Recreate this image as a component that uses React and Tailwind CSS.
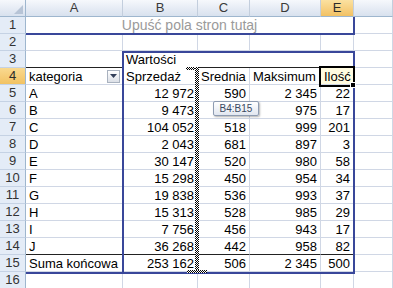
import React from "react";

// pivot: kategoria x (Sprzedaż, Srednia, Maksimum, Ilość)
const rows = [
  ["A", "12 972", "590", "2 345", "22"],
  ["B", "9 473", "557", "975", "17"],
  ["C", "104 052", "518", "999", "201"],
  ["D", "2 043", "681", "897", "3"],
  ["E", "30 147", "520", "980", "58"],
  ["F", "15 298", "450", "954", "34"],
  ["G", "19 838", "536", "993", "37"],
  ["H", "15 313", "528", "985", "29"],
  ["I", "7 756", "456", "943", "17"],
  ["J", "36 268", "442", "958", "82"],
];

const cell =
  "flex items-center border-r border-b px-[3px] text-[13px] leading-[15px] whitespace-nowrap overflow-hidden";
const grid = "border-[#d0d7e5]";
const ants =
  "absolute bg-[image:repeating-conic-gradient(#000_0%_25%,#fff_0%_50%)] bg-[length:2px_2px]";

function ColHead({ label, active }) {
  return (
    <div
      className={`flex items-center justify-center border-r border-r-[#c3cedd] border-b border-b-[#9eb6ce] text-[13px] ${
        active
          ? "bg-linear-to-b from-[#fbe1a0] to-[#f2c163] text-[#2b2b2b]"
          : "bg-linear-to-b from-[#f6f8fc] to-[#d8e1ee] text-[#3a3a3a]"
      }`}
    >
      {label}
    </div>
  );
}

function RowHead({ n, active }) {
  return (
    <div
      className={`flex items-center justify-center border-r border-r-[#9eb6ce] border-b border-b-[#c5d2e4] text-[13px] ${
        active
          ? "bg-linear-to-b from-[#f9d98f] to-[#f2c262] text-[#2b2b2b]"
          : "bg-[#e4ecf7] text-[#333]"
      }`}
    >
      {n}
    </div>
  );
}

function Cell({ children, right, className = "" }) {
  return (
    <div className={`${cell} ${right ? "justify-end" : "justify-start"} ${className}`}>
      {children}
    </div>
  );
}

export default function App() {
  return (
    <div className="w-[393px] h-[288px] overflow-hidden bg-white font-['Liberation_Sans',Arial,sans-serif] text-black">
      <div className="relative grid grid-cols-[26px_97px_75px_52px_71px_33px_39px] auto-rows-[17px]">
        {/* corner + column letters */}
        <div className="relative border-r border-r-[#9eb6ce] border-b border-b-[#9eb6ce] bg-linear-to-b from-[#f6f8fc] to-[#d8e1ee]">
          <div className="absolute right-[2px] bottom-[2px] w-0 h-0 border-l-[9px] border-l-transparent border-b-[9px] border-b-[#b7c4d6]" />
        </div>
        <ColHead label="A" />
        <ColHead label="B" />
        <ColHead label="C" />
        <ColHead label="D" />
        <ColHead label="E" active />
        <ColHead label="" />

        {/* 1: page field drop zone */}
        <RowHead n={1} />
        <Cell className={`col-span-5 justify-center text-[14px] text-[#9a9a9a] ${grid}`}>
          <span className="mx-auto">Upuść pola stron tutaj</span>
        </Cell>
        <Cell className={grid} />

        {/* 2 */}
        <RowHead n={2} />
        {[0, 1, 2, 3, 4, 5].map((i) => (
          <Cell key={i} className={grid} />
        ))}

        {/* 3 */}
        <RowHead n={3} />
        <Cell className={`${grid} border-b-[#222]`} />
        <Cell className="border-transparent">Wartości</Cell>
        <Cell className="col-span-3 border-r-transparent border-b-[#222]" />
        <Cell className={grid} />

        {/* 4: field headers */}
        <RowHead n={4} active />
        <Cell className={`${grid} pr-[2px]`}>
          <span>kategoria</span>
          <span className="ml-auto flex h-[13px] w-[13px] items-center justify-center border border-[#a9b2bf] bg-linear-to-b from-white to-[#dce0e7]">
            <svg width="7" height="4" viewBox="0 0 7 4">
              <path d="M0 0h7L3.5 4z" fill="#34405a" />
            </svg>
          </span>
        </Cell>
        <Cell className={grid}>Sprzedaż</Cell>
        <Cell className={grid}>Srednia</Cell>
        <Cell className={grid}>Maksimum</Cell>
        <Cell className={`${grid} bg-[#fffbe0]`}>Ilość</Cell>
        <Cell className={grid} />

        {/* 5-14 */}
        {rows.map((r, i) => (
          <React.Fragment key={r[0]}>
            <RowHead n={i + 5} />
            <Cell className={`${grid} ${i === 9 ? "border-b-[#222]" : ""}`}>{r[0]}</Cell>
            {r.slice(1).map((v, j) => (
              <Cell key={j} right className={`${grid} ${i === 9 ? "border-b-[#222]" : ""}`}>
                {v}
              </Cell>
            ))}
            <Cell className={grid} />
          </React.Fragment>
        ))}

        {/* 15: grand total */}
        <RowHead n={15} />
        <Cell className={grid}>Suma końcowa</Cell>
        <Cell right className={grid}>253 162</Cell>
        <Cell right className={grid}>506</Cell>
        <Cell right className={grid}>2 345</Cell>
        <Cell right className={grid}>500</Cell>
        <Cell className={grid} />

        {/* 16 */}
        <RowHead n={16} />
        {[0, 1, 2, 3, 4, 5].map((i) => (
          <Cell key={i} className={grid} />
        ))}

        {/* pivot frame */}
        <div className="absolute left-[26px] top-[33px] h-[2px] w-[329px] bg-[#39479a]" />
        <div className="absolute left-[353px] top-[17px] h-[18px] w-[2px] bg-[#39479a]" />
        <div className="absolute left-[122px] top-[51px] h-[2px] w-[233px] bg-[#39479a]" />
        <div className="absolute left-[122px] top-[51px] h-[223px] w-[2px] bg-[#39479a]" />
        <div className="absolute left-[353px] top-[51px] h-[223px] w-[2px] bg-[#39479a]" />
        <div className="absolute left-[26px] top-[272px] h-[2px] w-[329px] bg-[#39479a]" />

        {/* copy range B4:B15 */}
        <div className={`${ants} left-[186px] top-[67px] h-[3px] w-[13px]`} />
        <div className={`${ants} left-[195px] top-[67px] h-[206px] w-[4px]`} />
        <div className={`${ants} left-[187px] top-[270px] h-[3px] w-[20px]`} />

        {/* active cell E4 */}
        <div className="absolute left-[319px] top-[66px] h-[21px] w-[36px] border-2 border-black" />
        <div className="absolute left-[350px] top-[82px] h-[6px] w-[6px] border border-white bg-black" />

        {/* range tooltip */}
        <div className="absolute left-[213px] top-[101px] flex h-[15px] w-[46px] items-center justify-center rounded-[2px] border border-[#8e9cb2] bg-linear-to-b from-white to-[#e2e7f0] text-[10px] text-[#3b4960] shadow-[1px_1px_2px_rgba(0,0,0,0.3)]">
          B4:B15
        </div>
      </div>
    </div>
  );
}
